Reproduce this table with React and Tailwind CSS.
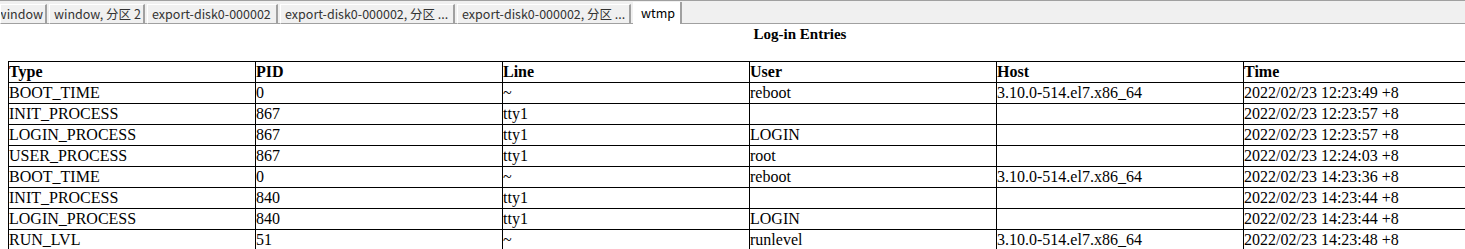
export default function App() {
  const tabs = [
    { label: "window", w: "w-[47px]" },
    { label: "window, 分区 2", w: "w-[96px]" },
    { label: "export-disk0-000002", w: "w-[131px]" },
    { label: "export-disk0-000002, 分区 ...", w: "w-[175px]" },
    { label: "export-disk0-000002, 分区 ...", w: "w-[174px]" },
  ];
  const rows = [
    ["BOOT_TIME", "0", "~", "reboot", "3.10.0-514.el7.x86_64", "2022/02/23 12:23:49 +8"],
    ["INIT_PROCESS", "867", "tty1", "", "", "2022/02/23 12:23:57 +8"],
    ["LOGIN_PROCESS", "867", "tty1", "LOGIN", "", "2022/02/23 12:23:57 +8"],
    ["USER_PROCESS", "867", "tty1", "root", "", "2022/02/23 12:24:03 +8"],
    ["BOOT_TIME", "0", "~", "reboot", "3.10.0-514.el7.x86_64", "2022/02/23 14:23:36 +8"],
    ["INIT_PROCESS", "840", "tty1", "", "", "2022/02/23 14:23:44 +8"],
    ["LOGIN_PROCESS", "840", "tty1", "LOGIN", "", "2022/02/23 14:23:44 +8"],
    ["RUN_LVL", "51", "~", "runlevel", "3.10.0-514.el7.x86_64", "2022/02/23 14:23:48 +8"],
  ];
  const heads = ["Type", "PID", "Line", "User", "Host", "Time"];
  return (
    <div className="w-[1465px] h-[249px] overflow-hidden bg-white">
      <div className="h-[24px] bg-[#f0f0f0] border-t border-t-[#a0a0a0] border-b border-b-[#a0a0a0] flex items-end font-['Noto_Sans_CJK_SC','Noto_Sans',sans-serif] text-[12.5px] text-[#333]">
        {tabs.map((t, i) => (
          <div
            key={i}
            className={`${t.w} shrink-0 h-[20px] mb-[-1px] mr-[2px] flex items-center ${i === 0 ? "justify-end pr-[2px]" : "pl-[4px]"} bg-[#f0f0f0] border-l border-l-white border-t border-t-white border-r-2 border-r-[#a0a0a0] border-b border-b-[#a0a0a0] whitespace-nowrap overflow-hidden leading-none`}
          >
            {t.label}
          </div>
        ))}
        <div className="w-[49px] shrink-0 h-[22px] mb-[-1px] flex items-center pl-[8px] bg-white border-r-2 border-r-[#a0a0a0] leading-none text-black">
          wtmp
        </div>
      </div>
      <div className="font-['Liberation_Serif',serif] text-black">
        <div className="w-[1600px] text-center font-bold text-[15px] leading-[20px] h-[37px]">
          Log-in Entries
        </div>
        <table className="ml-[8px] border-collapse table-fixed w-[1482px] text-[16px]">
          <thead>
            <tr className="h-[21px]">
              {heads.map((h) => (
                <th key={h} className="w-[247px] border border-black p-0 text-left font-bold leading-[20px] align-middle">
                  {h}
                </th>
              ))}
            </tr>
          </thead>
          <tbody>
            {rows.map((r, i) => (
              <tr key={i} className="h-[21px]">
                {r.map((c, j) => (
                  <td key={j} className="border border-black p-0 leading-[20px] whitespace-nowrap align-middle">
                    {c}
                  </td>
                ))}
              </tr>
            ))}
          </tbody>
        </table>
      </div>
    </div>
  );
}
